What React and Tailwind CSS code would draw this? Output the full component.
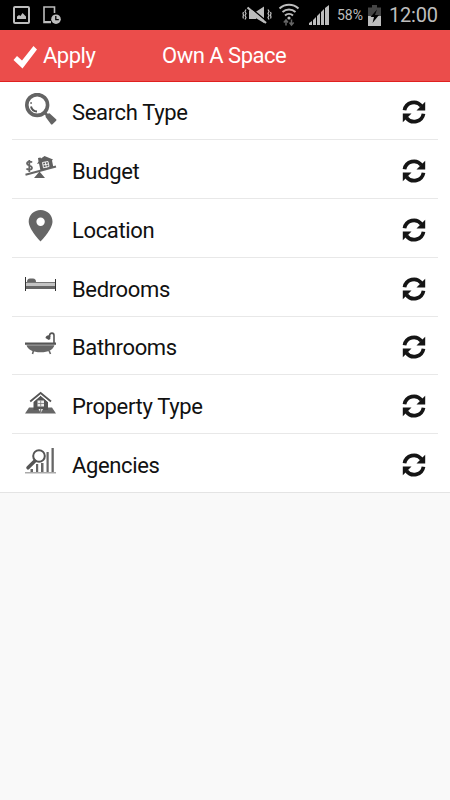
function StatusBar() {
  return (
    <div className="flex h-[30px] items-center bg-black pl-[13px] pr-3 text-[#bdbdbd]">
      {/* Notifications */}
      <svg className="h-[18px] w-[17px]" viewBox="0 0 17 18" fill="none">
        <rect x="1" y="1" width="15" height="16" rx="1" stroke="#bdbdbd" strokeWidth="2" />
        <path d="M4 13V10.5L6 9l1.5 1L9.500 7l2 2 1.500 1.500V13z" fill="#bdbdbd" />
      </svg>
      <svg className="ml-[13px] h-[18px] w-[18px]" viewBox="0 0 18 18" fill="none">
        <path d="M11.500 7V1H1v15.500h7" stroke="#bdbdbd" strokeWidth="1.6" />
        <path d="M1 15h7v2H1z" fill="#bdbdbd" />
        <circle cx="13" cy="13.200" r="4.800" fill="#bdbdbd" />
        <path d="M12.800 10v3.700h3" stroke="#000" strokeWidth="1.3" />
      </svg>

      {/* System */}
      <svg className="ml-auto h-[20px] w-[30px]" viewBox="0 0 30 20" fill="none" stroke="#bdbdbd">
        <path d="M7 5.500h5l2 2V14H7zM22 1.500V18l-10-6V8z" fill="#bdbdbd" stroke="none" />
        <path d="M7 1.500l18 15" stroke="#000" strokeWidth="1.5" />
        <path d="M5.500 2.500l18.500 15.500" strokeWidth="2.200" />
        <path
          d="M4 4.500l-1 2 1 2-1 2 1 2-1 2M1.500 7l-.5 1.500.5 1.500-.5 2 .5 1.500M26 4.500l1 2-1 2 1 2-1 2 1 2M28.500 7l.5 1.500-.5 1.500.5 2-.5 1.500"
          strokeWidth="1.200"
        />
      </svg>
      <svg className="ml-[6px] h-[24px] w-[22px]" viewBox="0 0 22 24" fill="none" stroke="#bdbdbd">
        <path d="M1.500 5.500a14 14 0 0 1 19 0M4.500 9a10 10 0 0 1 13 0M7 12.500a6 6 0 0 1 8 0" strokeWidth="2" />
        <circle cx="11" cy="15" r="1.600" fill="#bdbdbd" stroke="none" />
        <path d="M8 22.500v-5.500M5.800 19.500L8 17l2 2.500M13.500 16.500V22M11.500 19.500l2 2.500 2.200-2.500" stroke="#666" strokeWidth="1.5" />
      </svg>
      <svg className="ml-[9px] h-[20px] w-[20px]" viewBox="0 0 20 20" fill="#bdbdbd">
        <path d="M0 20v-2l3-2v4zM4 20v-5l3-3v8zM8 20v-9l3-3v12zM12 20V7l3-3v16zM16 20V3l4-3v20z" />
      </svg>
      <span className="ml-[8px] w-[26px] whitespace-nowrap text-[14px] leading-none">58%</span>
      <svg className="ml-[5px] h-[21px] w-[13px]" viewBox="0 0 13 21">
        <path d="M4 0h5v2.500h4V11H0V2.500h4z" fill="#444" />
        <path d="M0 11h13v10H0z" fill="#bdbdbd" />
        <path d="M9 4.500L2.500 12H6l-1.500 6L11 10H7z" fill="#000" />
      </svg>
      <span className="ml-[8px] w-[49px] whitespace-nowrap text-[20px] leading-none tracking-[-0.2px]">12:00</span>
    </div>
  );
}

function SearchIcon() {
  return (
    <svg className="h-8 w-8" viewBox="0 0 32 32" fill="none" stroke="#646464">
      <circle cx="12.200" cy="12" r="10.400" strokeWidth="3.600" />
      <path d="M6 13.500a6.500 6.500 0 0 0 6 5" stroke="#555" strokeWidth="2" />
      <path d="M5.200 10h1.800" strokeWidth="1.600" />
      <path d="M19.500 19.500l4 4" strokeWidth="3" />
      <path d="M21.600 23.700l2.500-2.500 6.300 5.800-3.600 3.600z" strokeWidth="2" strokeLinejoin="round" fill="#646464" />
    </svg>
  );
}

function BudgetIcon() {
  return (
    <svg className="h-8 w-8" viewBox="0 0 32 32" fill="none" stroke="#666">
      <path d="M.5 23.800L31 15.500" strokeWidth="2" />
      <path d="M14.500 20.500l5.500 6.500H9z" fill="#5f5f5f" stroke="none" />
      <path d="M7 11.500c-1-1.500-5-1.200-5 1 0 2.500 5 1.500 5 4.300 0 2.300-4.300 2.500-5.500.7M4.300 9v12" strokeWidth="1.800" />
      <path d="M12 13l1.500-2.500-.5-3.500 2.500-.5.500 1 3.500-2.500L28 8.500l-1 1 1.300 6.500L15.500 19.500 14 12.500z" fill="#5f5f5f" stroke="none" />
      <path d="M17.500 11.500l5.500-1 1 5-5.500 1.300zM20.200 11l1.200 5.500M18 14l5.500-1" stroke="#fff" strokeWidth=".9" />
    </svg>
  );
}

function LocationIcon() {
  return (
    <svg className="h-8 w-8" viewBox="0 0 32 32">
      <path
        d="M15.600 0C9 0 3.700 5.100 3.700 11.500 3.700 19.500 15.600 31.500 15.600 31.500S27.500 19.500 27.500 11.500C27.500 5.100 22.200 0 15.600 0zm0 7.600a4.200 4.200 0 1 1 0 8.400 4.200 4.200 0 0 1 0-8.400z"
        fill="#666"
      />
    </svg>
  );
}

function BedIcon() {
  return (
    <svg className="h-8 w-8" viewBox="0 0 32 32">
      <path d="M1 14h29v3H1z" fill="#c4c4c4" />
      <path d="M1 13h29v1H1z" fill="#777" />
      <path d="M1 17h29v3H1z" fill="#666" />
      <path d="M2 13c0-2 1-3.500 3-3.500h3c2 0 3 1.500 3 3.500z" fill="#666" />
      <path d="M0 8h1v14H0zM30 10h1v12h-1z" fill="#333" />
    </svg>
  );
}

function BathIcon() {
  return (
    <svg className="h-8 w-8" viewBox="0 0 32 32" fill="none">
      <path d="M0 14.500h31v2.300H0z" fill="#555" />
      <path d="M1.500 17.300H29.500c-1.500 4.500-6 7-13.800 7S3 22 1.500 17.300z" fill="#666" />
      <path d="M8.500 22.500L7.500 26M24 22.500l1.500 3.500" stroke="#666" strokeWidth="1.600" />
      <path d="M29 15V7.500c0-3.200-4-3.200-4.500 0V9" stroke="#555" strokeWidth="1.600" />
      <path d="M20.500 10c0-2 2.500-3.500 4.800-2.500V11l-1.500 1z" fill="#555" />
    </svg>
  );
}

function PropertyIcon() {
  return (
    <svg className="h-8 w-8" viewBox="0 0 32 32" fill="none">
      <path d="M0 27.500l4-6h5v2h13v-2h5l4 6z" fill="#666" />
      <path d="M15.600 9.500L23 16v8H8.500v-8z" fill="#555" />
      <path d="M5.200 15.500L15.600 7 26 15.500" stroke="#555" strokeWidth="1.800" />
      <path d="M7.500 16L15.600 9.300l8.100 6.700" stroke="#fff" strokeWidth=".9" />
      <path d="M12.500 14.500h6.500v6h-6.500z" fill="#eee" />
      <path d="M15.700 14.500v6M12.500 17.500H19" stroke="#777" strokeWidth=".8" />
      <path d="M13.500 23h4.500l-2.200 4z" fill="#eee" />
      <path d="M15.700 21.500v5" stroke="#666" strokeWidth="1" />
    </svg>
  );
}

function AgencyIcon() {
  return (
    <svg className="h-8 w-8" viewBox="0 0 32 32" fill="none">
      <path d="M0 27h31v1.500H0z" fill="#aaa" />
      <path d="M5.500 24H8v3H5.500zM11 19h2.200v8H11zM16 18h2.500v9H16zM21.500 7h2.200v20h-2.200zM26.500 3h2.300v24h-2.300z" fill="#666" />
      <circle cx="14" cy="11" r="5.800" fill="#fff" stroke="#555" strokeWidth="2" />
      <path d="M9.800 16L3 22.800" stroke="#555" strokeWidth="3.500" strokeLinecap="round" />
    </svg>
  );
}

function RefreshIcon() {
  return (
    <svg className="h-6 w-6" viewBox="0 0 24 24" fill="none">
      <path d="M2.500 10.300A9.500 9.500 0 0 1 19.500 6.200M21.500 13.700A9.500 9.500 0 0 1 4.500 17.800" stroke="#151515" strokeWidth="3.700" />
      <path d="M23.200 1.800v8.700h-8.700zM.8 22.200v-8.700h8.700z" fill="#151515" />
    </svg>
  );
}

const filters = [
  { label: "Search Type", icon: SearchIcon, height: "h-[58px]" },
  { label: "Budget", icon: BudgetIcon, height: "h-[59px]" },
  { label: "Location", icon: LocationIcon, height: "h-[59px]" },
  { label: "Bedrooms", icon: BedIcon, height: "h-[59px]" },
  { label: "Bathrooms", icon: BathIcon, height: "h-[58px]" },
  { label: "Property Type", icon: PropertyIcon, height: "h-[59px]" },
  { label: "Agencies", icon: AgencyIcon, height: "h-[58px]" },
];

export default function App() {
  return (
    <div className="h-screen overflow-hidden bg-[#f9f9f9] font-['Roboto',sans-serif]">
      <StatusBar />

      {/* Header */}
      <header className="flex h-[52px] items-center border-b border-[#e02020] bg-[#eb4d4b] pl-[13px] text-[22px] tracking-[-0.5px] text-white">
        <svg className="mt-1 h-6 w-6" viewBox="0 0 24 24" fill="#fff">
          <path d="M20.500 0L24 3.500 9.500 22.500.5 14l3.500-4 5 4.500z" />
        </svg>
        <span className="ml-[6px] w-[119px]">Apply</span>
        <h1>Own A Space</h1>
      </header>

      {/* Filters */}
      <ul className="border-b border-[#e4e4e4] bg-white">
        {filters.map(({ label, icon: Icon, height }, i) => (
          <li
            key={label}
            className={`mx-3 flex items-center border-[#e8e8e8] pl-[13px] pr-3 ${height} ${
              i < filters.length - 1 ? "border-b" : ""
            }`}
          >
            <span className="-mt-1">
              <Icon />
            </span>
            <span className="ml-[15px] mt-1 flex-1 text-[22px] tracking-[-0.35px] text-[#111]">{label}</span>
            <span className="mt-[3px]">
              <RefreshIcon />
            </span>
          </li>
        ))}
      </ul>
    </div>
  );
}
